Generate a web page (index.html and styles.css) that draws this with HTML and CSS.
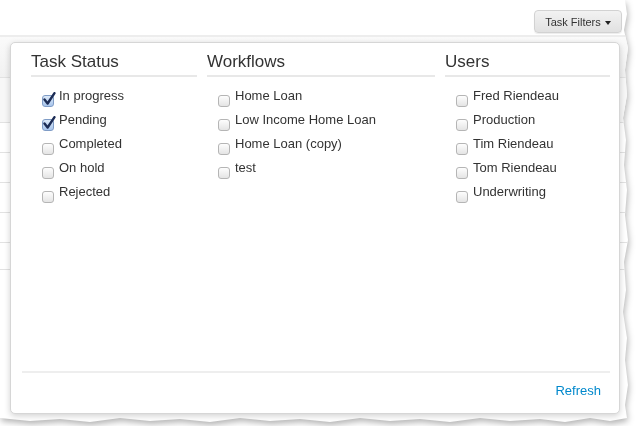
FILE: index.html
```html
<!DOCTYPE html>
<html lang="en">
<head>
    <meta charset="UTF-8">
    <meta name="viewport" content="width=device-width, initial-scale=1.0">
    <title>Task Filters</title>
    <link rel="stylesheet" href="styles.css">
</head>

<body>
    <div class="sheet-wrap">
        <div class="sheet">
            <div class="toolbar">
                <button class="filter-btn">Task Filters <span class="caret"></span></button>
            </div>

            <!-- task table behind the dropdown -->
            <div class="task-table">
                <div class="row head"></div>
                <div class="row tall"></div>
                <div class="row"></div>
                <div class="row"></div>
                <div class="row"></div>
                <div class="row"></div>
                <div class="row short"></div>
            </div>

            <div class="filter-menu">
                <div class="columns">
                    <div class="col col-status">
                        <h4>Task Status</h4>
                        <ul>
                            <li><span class="box checked"><svg viewBox="0 0 14 14"><path d="M2.5 7.5 L5.6 11.5 L12.5 1.2" /></svg></span>In progress</li>
                            <li><span class="box checked"><svg viewBox="0 0 14 14"><path d="M2.5 7.5 L5.6 11.5 L12.5 1.2" /></svg></span>Pending</li>
                            <li><span class="box"></span>Completed</li>
                            <li><span class="box"></span>On hold</li>
                            <li><span class="box"></span>Rejected</li>
                        </ul>
                    </div>
                    <div class="col col-workflows">
                        <h4>Workflows</h4>
                        <ul>
                            <li><span class="box"></span>Home Loan</li>
                            <li><span class="box"></span>Low Income Home Loan</li>
                            <li><span class="box"></span>Home Loan (copy)</li>
                            <li><span class="box"></span>test</li>
                        </ul>
                    </div>
                    <div class="col col-users">
                        <h4>Users</h4>
                        <ul>
                            <li><span class="box"></span>Fred Riendeau</li>
                            <li><span class="box"></span>Production</li>
                            <li><span class="box"></span>Tim Riendeau</li>
                            <li><span class="box"></span>Tom Riendeau</li>
                            <li><span class="box"></span>Underwriting</li>
                        </ul>
                    </div>
                </div>
                <div class="menu-footer">
                    <a href="#" class="refresh">Refresh</a>
                </div>
            </div>
        </div>
    </div>
</body>
</html>
```

FILE: styles.css
```css
body {
    margin: 0;
    background: #fff;
    font-family: "Liberation Sans", Arial, sans-serif;
    color: #333;
}

/* torn screenshot edge */
.sheet-wrap {
    width: 630px;
    height: 426px;
    filter: drop-shadow(1px 3px 3px rgba(0, 0, 0, 0.3));
}

.sheet {
    position: relative;
    width: 100%;
    height: 100%;
    background: #fff;
    overflow: hidden;
    clip-path: polygon(0 0, 625px 0, 627px 14px, 624px 30px, 628px 48px, 625px 70px, 627px 95px,
        623px 118px, 626px 140px, 624px 165px, 627px 190px, 625px 215px, 628px 240px,
        624px 262px, 626px 290px, 623px 312px, 627px 338px, 625px 360px, 628px 385px,
        625px 405px, 627px 418px, 610px 421px, 590px 418px, 565px 422px, 540px 419px,
        510px 421px, 480px 418px, 450px 422px, 420px 419px, 390px 421px, 360px 418px,
        330px 422px, 300px 419px, 270px 421px, 240px 418px, 210px 422px, 180px 419px,
        150px 421px, 120px 418px, 90px 422px, 60px 419px, 30px 421px, 0 418px);
}

.toolbar {
    display: flex;
    justify-content: flex-end;
    height: 37px;
    padding: 10px 8px 0 0;
    box-sizing: border-box;
    border-bottom: 2px solid #ededed;
}

.filter-btn {
    width: 88px;
    height: 23px;
    padding: 0;
    font-family: "Liberation Sans", Arial, sans-serif;
    font-size: 11px;
    color: #333;
    background: linear-gradient(to bottom, #f2f2f2, #e1e1e1);
    border: 1px solid #d2d2d2;
    border-radius: 4px;
    box-shadow: 0 1px 1px rgba(0, 0, 0, 0.08);
}

.caret {
    display: inline-block;
    width: 0;
    height: 0;
    margin-left: 1px;
    vertical-align: 1px;
    border-top: 4px solid #222;
    border-left: 3.5px solid transparent;
    border-right: 3.5px solid transparent;
}

.task-table .row {
    height: 29px;
    border-bottom: 1px solid #e2e2e2;
}

.task-table .head {
    height: 40px;
    background: linear-gradient(to bottom, #fafafa, #f1f1f1);
}

.task-table .tall {
    height: 44px;
    background: #f7f7f7;
}

.task-table .short {
    height: 26px;
}

/* dropdown panel */
.filter-menu {
    position: absolute;
    left: 10px;
    top: 42px;
    width: 610px;
    height: 372px;
    box-sizing: border-box;
    display: flex;
    flex-direction: column;
    background: #fff;
    border: 1px solid #d6d6d6;
    border-radius: 5px;
    box-shadow: 0 2px 6px rgba(0, 0, 0, 0.18);
}

.columns {
    display: flex;
    gap: 10px;
    padding: 9px 9px 0 20px;
}

.col-status { width: 166px; }
.col-workflows { width: 228px; }
.col-users { flex: 1; }

.col h4 {
    margin: 0;
    font-size: 17px;
    font-weight: normal;
    line-height: 20px;
    padding-bottom: 3px;
    border-bottom: 2px solid #e8e8e8;
}

.col ul {
    list-style: none;
    margin: 7px 0 0;
    padding: 0;
}

.col li {
    display: flex;
    align-items: flex-start;
    height: 24px;
    line-height: 24px;
    font-size: 13px;
}

.box {
    flex: none;
    position: relative;
    width: 10px;
    height: 10px;
    margin: 11px 5px 0 11px;
    border: 1px solid #b5b5b5;
    border-radius: 3px;
    background: linear-gradient(to bottom, #fdfdfd, #e4e4e4);
}

.box.checked {
    border-color: #7f9cc6;
    background: linear-gradient(to bottom, #dce9f8, #a8c5ec);
}

.box svg {
    position: absolute;
    left: -1px;
    top: -4px;
    width: 14px;
    height: 14px;
    fill: none;
    stroke: #1c2c55;
    stroke-width: 2.4;
    stroke-linecap: round;
    stroke-linejoin: round;
}

.menu-footer {
    margin: auto 9px 0 11px;
    padding: 8px 0 12px;
    border-top: 2px solid #eeeeee;
    text-align: right;
}

.refresh {
    display: inline-block;
    padding-right: 9px;
    font-size: 13px;
    line-height: 20px;
    color: #0088cc;
    text-decoration: none;
}
```
